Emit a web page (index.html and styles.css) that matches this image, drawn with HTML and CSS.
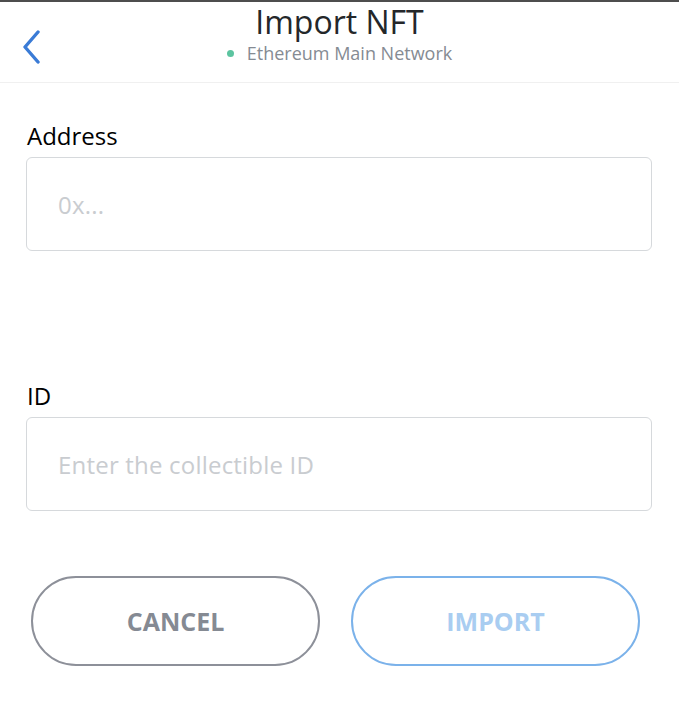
FILE: index.html
```html
<!DOCTYPE html>
<html>
<head>
<meta charset="utf-8">
<link rel="stylesheet" href="styles.css">
</head>
<body>
<div class="screen">
  <header class="header">
    <button class="back" aria-label="Back">
      <svg width="20" height="34" viewBox="0 0 20 34"><path d="M16 2 L3 17 L16 32" fill="none" stroke="#3a7bd6" stroke-width="3.4" stroke-linecap="round" stroke-linejoin="round"/></svg>
    </button>
    <div class="titles">
      <div class="title">Import NFT</div>
      <div class="network"><span class="dot"></span>Ethereum Main Network</div>
    </div>
  </header>
  <main class="form">
    <div class="field">
      <label class="label">Address</label>
      <div class="input"><span class="placeholder">0x...</span></div>
    </div>
    <div class="field field-id">
      <label class="label">ID</label>
      <div class="input"><span class="placeholder">Enter the collectible ID</span></div>
    </div>
    <div class="actions">
      <button class="btn btn-cancel">CANCEL</button>
      <button class="btn btn-import">IMPORT</button>
    </div>
  </main>
</div>
</body>
</html>
```
FILE: styles.css
```css
* { box-sizing: border-box; }
html, body { margin: 0; padding: 0; background: #fff; }
body { font-family: "Open Sans", "Noto Sans", sans-serif; color: #24272a; }
.screen { width: 679px; height: 711px; border-top: 2px solid #4e4e4e; }
.header {
  height: 81px;
  border-bottom: 1px solid #f0f0f0;
  display: flex;
  align-items: flex-start;
  justify-content: center;
  position: relative;
}
.back {
  position: absolute;
  left: 22px;
  top: 28px;
  border: 0;
  background: none;
  padding: 0;
  display: flex;
}
.titles { display: flex; flex-direction: column; align-items: center; }
.title { font-size: 32px; line-height: 34px; margin-top: 3px; color: #24272a; }
.network { font-size: 18px; line-height: 20px; color: #858b93; margin-top: 4px; display: flex; align-items: center; }
.dot { width: 7px; height: 7px; border-radius: 50%; background: #5cc4a0; margin-right: 13px; }
.form { padding: 0 27px 0 26px; }
.field { display: flex; flex-direction: column; }
.field:first-child { margin-top: 39px; }
.field-id { margin-top: 131px; }
.label { font-size: 24px; line-height: 28px; color: #000; margin-left: 1px; margin-bottom: 7px; }
.input {
  height: 94px;
  border: 1px solid #d6d9dc;
  border-radius: 6px;
  display: flex;
  align-items: center;
  padding-left: 31px;
}
.placeholder { font-size: 24px; letter-spacing: 0.2px; color: #c9ccd0; }
.actions { display: flex; gap: 31px; margin: 65px 12px 0 5px; }
.btn {
  flex: 1;
  height: 90px;
  border-radius: 45px;
  background: #fff;
  font-family: "Open Sans", sans-serif;
  font-weight: 700;
  font-size: 25px;
}
.btn-cancel { border: 2px solid #8d9099; color: #858a93; }
.btn-import { border: 2px solid #7bb2ea; color: #a9cdf1; }
```
